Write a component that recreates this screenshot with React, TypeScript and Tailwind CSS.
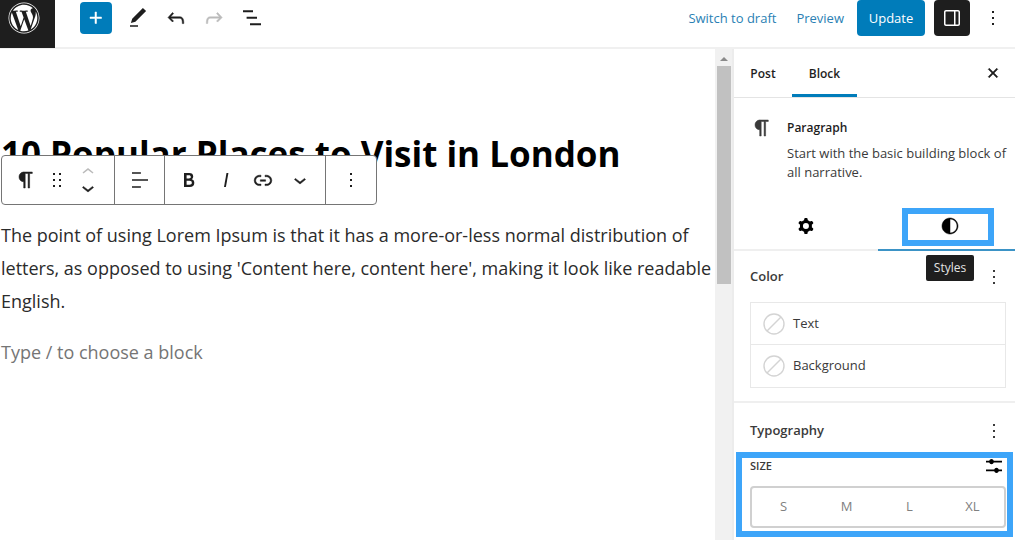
import React, { useState } from "react";
import { FaWordpress } from "react-icons/fa";

const paths = {
  plus: "M11 12.5V17.5H12.5V12.5H17.5V11H12.5V6H11V11H6V12.5H11Z",
  edit: "M20.1 5.1L16.9 2 6.2 12.7l-1.3 4.4 4.5-1.3L20.1 5.1zM4 20.8h8v-1.5H4v1.5z",
  undo: "M18.3 11.7c-.6-.6-1.4-.9-2.3-.9H6.7l2.9-3.3-1.1-1-4.5 5L8.5 16l1-1-2.7-2.7H16c.5 0 .9.2 1.3.5 1 1 1 3.4 1 4.5v.3h1.5v-.2c0-1.5 0-4.3-1.5-5.7z",
  redo: "M15.6 6.5l-1.1 1 2.9 3.3H8c-.9 0-1.7.3-2.3.9-1.4 1.5-1.4 4.2-1.4 5.6v.2h1.5v-.3c0-1.1 0-3.5 1-4.5.3-.3.7-.5 1.3-.5h9.2L14.5 15l1.1 1.1 4.6-4.6-4.6-5z",
  list: "M13 4.2H3v2h10v-2zm-3 13v2h11v-2H10zm7-6.5H6.6v2H17v-2z",
  drawer: "M18 4H6c-1.1 0-2 .9-2 2v12c0 1.1.9 2 2 2h12c1.1 0 2-.9 2-2V6c0-1.1-.9-2-2-2zm-4 14.5H6c-.3 0-.5-.2-.5-.5V6c0-.3.2-.5.5-.5h8v13zm4.5-.5c0 .3-.2.5-.5.5h-2.5v-13H18c.3 0 .5.2.5.5v12z",
  more: "M13 19h-2v-2h2v2zm0-6h-2v-2h2v2zm0-6h-2V5h2v2z",
  close: "M12 13.06l3.712 3.713 1.061-1.06L13.061 12l3.712-3.712-1.06-1.06L12 10.938 8.288 7.227l-1.061 1.06L10.939 12l-3.712 3.712 1.06 1.061L12 13.061z",
  paragraph: "M18.3 4H9.9v-.1l-.9.2c-2.3.4-4 2.4-4 4.8s1.7 4.4 4 4.8l.7.1V20h1.5V5.5h2.9V20h1.5V5.5h2.7V4z",
  drag: "M8 7h2V5H8v2zm0 6h2v-2H8v2zm0 6h2v-2H8v2zm6-14v2h2V5h-2zm0 8h2v-2h-2v2zm0 6h2v-2h-2v2z",
  up: "M6.5 12.4L12 8l5.5 4.4-.9 1.2L12 10l-4.5 3.6-1-1.2z",
  down: "M17.5 11.6L12 16l-5.5-4.4.9-1.2L12 14l4.5-3.6 1 1.2z",
  align: "M4 19.8h8.9v-1.5H4v1.5zm8.9-15.6H4v1.5h8.9V4.2zm-8.9 7v1.5h16v-1.5H4z",
  bold: "M14.7 11.3c1-.6 1.5-1.6 1.5-3 0-2.3-1.3-3.4-4-3.4H7v14h5.8c1.4 0 2.5-.3 3.3-1 .8-.7 1.2-1.7 1.2-2.9.1-1.9-.8-3.1-2.6-3.7zm-5.1-4h2.3c.6 0 1.1.1 1.4.4.3.3.5.7.5 1.2s-.2 1-.5 1.2c-.3.3-.8.4-1.4.4H9.6V7.3zm4.6 9c-.4.3-1 .4-1.7.4H9.6v-3.9h2.9c.7 0 1.3.2 1.7.5.4.3.6.8.6 1.5s-.2 1.2-.6 1.5z",
  italic: "M12.5 5L10 19h1.9l2.5-14z",
  link: "M15.6 7.2H14v1.5h1.6c2 0 3.7 1.7 3.7 3.7s-1.7 3.7-3.7 3.7H14v1.5h1.6c2.8 0 5.2-2.3 5.2-5.2 0-2.9-2.3-5.2-5.2-5.2zM4.7 12.4c0-2 1.7-3.7 3.7-3.7H10V7.2H8.4c-2.9 0-5.2 2.3-5.2 5.2 0 2.9 2.3 5.2 5.2 5.2H10v-1.5H8.4c-2 0-3.7-1.7-3.7-3.7zm4.6.9h5.3v-1.5H9.3v1.5z",
  cog: "M10.289 4.836A1 1 0 0111.275 4h1.306a1 1 0 01.987.836l.244 1.466c.787.26 1.503.679 2.108 1.218l1.393-.522a1 1 0 011.216.437l.653 1.13a1 1 0 01-.23 1.273l-1.148.944a6.025 6.025 0 010 2.435l1.149.946a1 1 0 01.23 1.272l-.653 1.13a1 1 0 01-1.216.437l-1.394-.522c-.605.54-1.32.958-2.108 1.218l-.244 1.466a1 1 0 01-.987.836h-1.306a1 1 0 01-.986-.836l-.244-1.466a5.995 5.995 0 01-2.108-1.218l-1.394.522a1 1 0 01-1.217-.436l-.653-1.131a1 1 0 01.23-1.272l1.149-.946a6.026 6.026 0 010-2.435l-1.148-.944a1 1 0 01-.23-1.272l.653-1.131a1 1 0 011.217-.437l1.393.522a5.994 5.994 0 012.108-1.218l.244-1.466zM14.929 12a3 3 0 11-6 0 3 3 0 016 0z",
  styles: "M12 4c-4.4 0-8 3.6-8 8v.1c0 4.1 3.2 7.5 7.2 7.9h.8c4.4 0 8-3.6 8-8s-3.6-8-8-8zm0 15V5c3.9 0 7 3.1 7 7s-3.1 7-7 7z",
  sliders: "M4 6.7h3.2a2.4 2.4 0 0 1 4.6 0H20v1.8h-8.2a2.4 2.4 0 0 1-4.6 0H4zM4 15.5h8.2a2.4 2.4 0 0 1 4.6 0H20v1.8h-3.2a2.4 2.4 0 0 1-4.6 0H4z",
};

type IconName = keyof typeof paths;

const heavy: IconName[] = ["paragraph", "undo", "redo", "close", "styles", "down", "link", "plus"];

function Icon({ name, className = "size-6" }: { name: IconName; className?: string }) {
  return (
    <svg
      viewBox="0 0 24 24"
      fill="currentColor"
      fillRule="evenodd"
      stroke="currentColor"
      strokeWidth={heavy.includes(name) ? 0.5 : 0}
      aria-hidden="true"
      className={`shrink-0 ${className}`}
    >
      <path d={paths[name]} />
    </svg>
  );
}

function IconButton({ name, label, className = "", iconClass }: { name: IconName; label: string; className?: string; iconClass?: string }) {
  return (
    <button type="button" aria-label={label} className={`flex items-center justify-center ${className}`}>
      <Icon name={name} className={iconClass} />
    </button>
  );
}

function Header() {
  return (
    <header className="flex h-[49px] shrink-0 items-start border-b-2 border-[#f0f0f0]">
      <a href="#dashboard" aria-label="View posts" className="flex h-12 w-[55px] shrink-0 justify-center bg-[#1e1e1e] pt-0.5 pr-2 text-white">
        <FaWordpress className="size-8" />
      </a>
      <div className="flex h-9 flex-1 items-center pl-[25px]">
        <IconButton name="plus" label="Add block" className="size-8 rounded-sm bg-[#007cba] text-white" />
        <div className="flex gap-[14px] pl-[14px] text-[#1e1e1e]">
          <IconButton name="edit" label="Tools" />
          <IconButton name="undo" label="Undo" />
          <IconButton name="redo" label="Redo" className="text-[#bbbbbb]" />
          <IconButton name="list" label="List view" />
        </div>
      </div>
      <div className="flex h-9 items-center text-[13px] text-[#2a7fb4]">
        <button type="button" className="mr-5 pt-0.5">Switch to draft</button>
        <button type="button" className="mr-[13px] pt-0.5">Preview</button>
        <button type="button" className="h-9 w-[68px] rounded-sm bg-[#007cba] pt-0.5 text-white">Update</button>
        <IconButton name="drawer" label="Settings" className="ml-[9px] h-9 w-9 rounded-sm bg-[#1e1e1e] text-white" />
        <IconButton name="more" label="Options" className="mr-2.5 ml-[11px] text-[#1e1e1e]" />
      </div>
    </header>
  );
}

function BlockToolbar() {
  return (
    <div role="toolbar" aria-label="Block tools" className="absolute top-[106px] left-px flex h-[50px] divide-x divide-[#757575] rounded-sm border border-[#757575] bg-white text-[#1e1e1e]">
      <div className="flex w-[113px] items-center gap-[7px] pl-3">
        <IconButton name="paragraph" label="Paragraph" />
        <IconButton name="drag" label="Drag" />
        <div className="flex flex-col">
          <IconButton name="up" label="Move up" className="h-4 w-6 text-[#bbbbbb]" />
          <IconButton name="down" label="Move down" className="h-4 w-6" />
        </div>
      </div>
      <IconButton name="align" label="Align text" className="w-[50px]" />
      <div className="flex w-[161px] items-center gap-[13px] pl-3">
        <IconButton name="bold" label="Bold" />
        <IconButton name="italic" label="Italic" />
        <IconButton name="link" label="Link" />
        <IconButton name="down" label="More formatting" />
      </div>
      <IconButton name="more" label="Block options" className="w-[50px]" />
    </div>
  );
}

function Editor() {
  return (
    <main className="relative min-w-0 flex-1 pt-[81px] pl-px">
      <h1 className="text-[35px] leading-[48px] font-bold text-black">10 Popular Places to Visit in London</h1>
      <BlockToolbar />
      <p className="mt-[41px] text-lg leading-[33px] text-[#2b2b2b]">
        The point of using Lorem Ipsum is that it has a more-or-less normal distribution of letters, as opposed to
        using 'Content here, content here', making it look like readable English.
      </p>
      <p className="mt-[18px] text-lg leading-[33px] text-[#757575]">Type / to choose a block</p>
    </main>
  );
}

function Scrollbar() {
  return (
    <div aria-hidden="true" className="flex w-[17px] shrink-0 flex-col items-center bg-[#f1f1f1] pt-2">
      <span className="size-0 border-x-4 border-b-4 border-x-transparent border-b-[#8a8a8a]" />
      <span className="mt-[5px] h-[218px] w-[14px] bg-[#c1c1c1]" />
    </div>
  );
}

function ColorRow({ label }: { label: string }) {
  return (
    <button type="button" className="flex h-[42px] w-full items-center gap-2 px-3">
      <svg viewBox="0 0 22 22" fill="none" stroke="#d4d4d4" strokeWidth="1.4" aria-hidden="true" className="size-[22px]">
        <circle cx="11" cy="11" r="10" />
        <path d="M4 18 18 4" />
      </svg>
      {label}
    </button>
  );
}

const sizes = ["S", "M", "L", "XL"];

function Sidebar() {
  const [size, setSize] = useState("");
  return (
    <aside className="w-[283px] shrink-0 border-l-2 border-[#ececec] text-[13px] text-[#3a3a3a]">
      <div role="tablist" aria-label="Settings" className="flex h-[49px] items-stretch border-b border-[#e4e4e4] text-xs font-semibold text-[#1e1e1e]">
        <button type="button" role="tab" aria-selected="false" className="w-[58px] pt-0.5">Post</button>
        <button type="button" role="tab" aria-selected="true" className="w-[65px] border-b-3 border-[#007cba] pt-[5px]">Block</button>
        <IconButton name="close" label="Close settings" className="mr-2.5 ml-auto" />
      </div>

      <section className="flex h-[110px] gap-[13px] pt-[18px] pl-4">
        <Icon name="paragraph" />
        <div className="pt-1">
          <h2 className="text-xs font-semibold text-[#1e1e1e]">Paragraph</h2>
          <p className="mt-2 w-[224px] leading-[19px]">Start with the basic building block of all narrative.</p>
        </div>
      </section>

      <div role="tablist" aria-label="Block settings" className="flex h-[43px] border-b-2 border-[#efefef] text-black">
        <button type="button" role="tab" aria-selected="false" aria-label="Settings" className="flex flex-1 justify-center pt-1.5">
          <Icon name="cog" />
        </button>
        <div className="relative -mb-0.5 flex w-[137px] border-b-2 border-[#3b93c6]">
          <button type="button" role="tab" aria-selected="true" aria-label="Styles" className="flex flex-1 justify-center pt-1.5 pl-1.5">
            <Icon name="styles" />
          </button>
          <span className="pointer-events-none absolute right-[21px] bottom-[3px] left-6 h-[38px] border-6 border-[#3da5f9]" />
          <span role="tooltip" className="absolute top-[47px] left-12 flex h-[26px] w-12 items-center justify-center rounded-xs bg-[#1e1e1e] text-xs text-[#e4e4e4]">
            Styles
          </span>
        </div>
      </div>

      <section className="h-[152px] border-b-2 border-[#efefef] pt-3.5 pr-[9px] pl-4">
        <div className="flex items-center justify-between font-semibold">
          <h3>Color</h3>
          <IconButton name="more" label="Color options" />
        </div>
        <div className="mt-[13px] divide-y divide-[#e8e8e8] border border-[#e8e8e8]">
          <ColorRow label="Text" />
          <ColorRow label="Background" />
        </div>
      </section>

      <section className="relative pt-4 pr-[9px] pb-3 pl-4">
        <div className="flex items-center justify-between font-semibold">
          <h3>Typography</h3>
          <IconButton name="more" label="Typography options" />
        </div>
        <div className="mt-[11px] flex items-center justify-between">
          <h4 className="text-[11px] font-semibold">SIZE</h4>
          <IconButton name="sliders" label="Set custom size" className="text-black" />
        </div>
        <div role="radiogroup" aria-label="Font size" className="mt-2 flex h-[42px] rounded-sm border-2 border-[#d0d0d0] text-[#808080]">
          {sizes.map((s) => (
            <button key={s} type="button" role="radio" aria-checked={size === s} onClick={() => setSize(s)} className="flex-1">
              {s}
            </button>
          ))}
        </div>
        <span className="pointer-events-none absolute inset-x-0.5 top-[49px] bottom-[3px] border-6 border-[#3da5f9]" />
      </section>
    </aside>
  );
}

export default function App() {
  return (
    <div className="flex min-h-screen flex-col bg-white font-['Open_Sans','Noto_Sans',sans-serif]">
      <Header />
      <div className="flex flex-1">
        <Editor />
        <Scrollbar />
        <Sidebar />
      </div>
    </div>
  );
}
